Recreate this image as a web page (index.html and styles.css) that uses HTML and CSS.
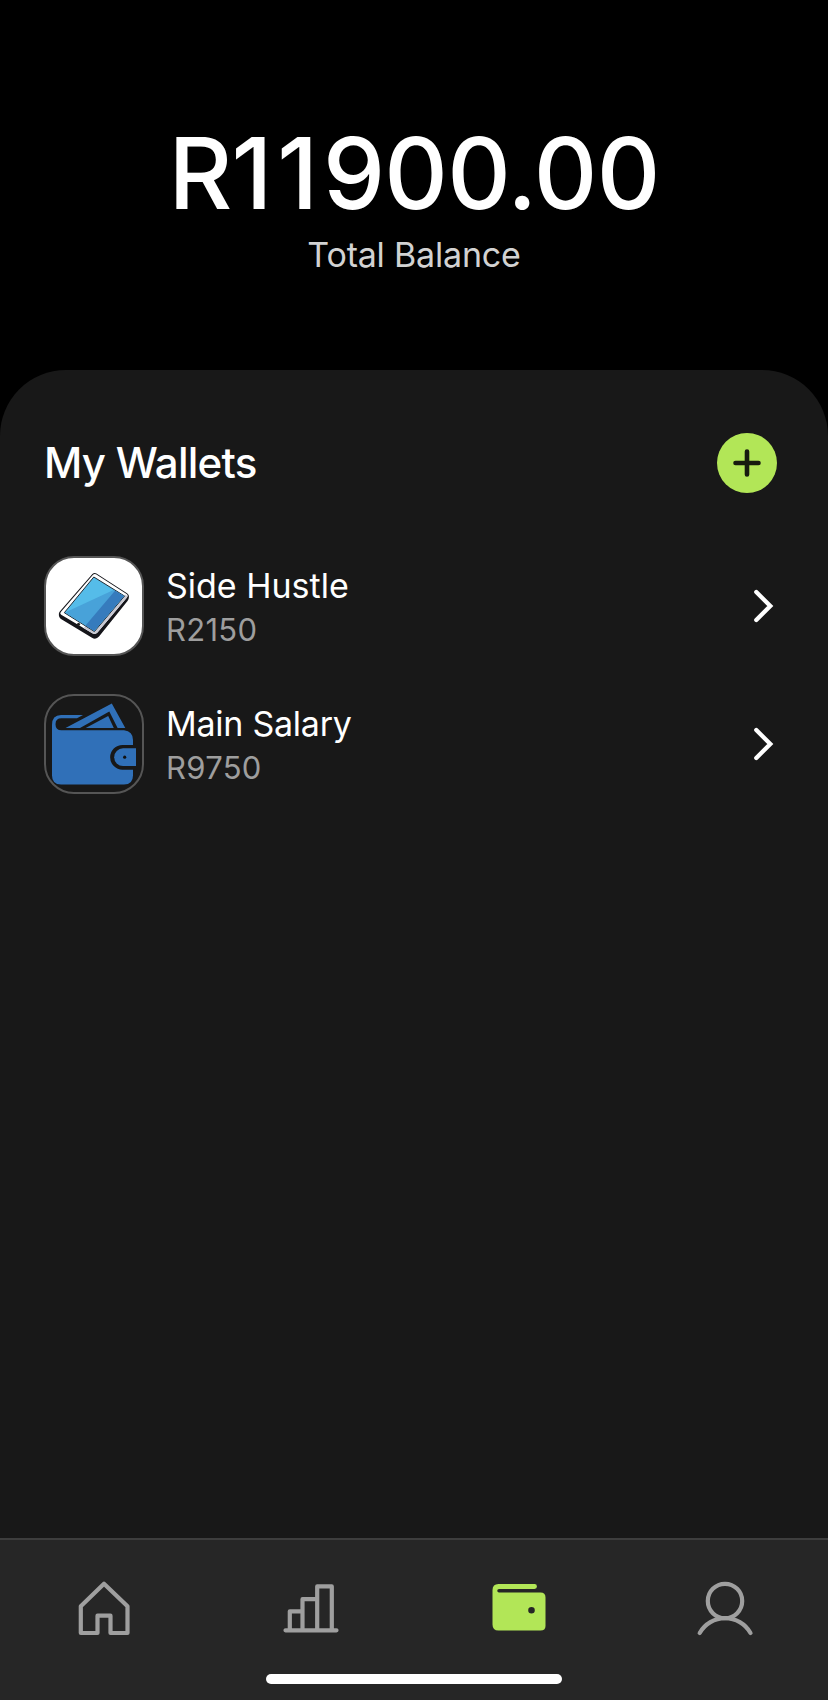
FILE: index.html
```html
<!DOCTYPE html>
<html lang="en">
<head>
<meta charset="utf-8">
<title>My Wallets</title>
<link rel="stylesheet" href="styles.css">
</head>
<body>
<div class="app">
  <header class="balance">
    <div class="balance-amount">R<span class="ones">11</span>900.00</div>
    <div class="balance-label">Total Balance</div>
  </header>
  <main class="sheet">
    <div class="sheet-head">
      <h1 class="sheet-title">My Wallets</h1>
      <button class="add" aria-label="Add wallet">
        <svg width="60" height="60" viewBox="0 0 60 60"><path d="M18.5 30h23M30 18.5v23" stroke="#171b0f" stroke-width="4.6" stroke-linecap="round"/></svg>
      </button>
    </div>
    <ul class="wallets">
      <li class="wallet">
        <div class="tile tile-light">
          <svg width="100" height="100" viewBox="0 0 100 100">
            <path d="M48.4 18Q50.3 16.3 52.4 17.5L83 37.3Q85.5 39 84.8 42Q84.6 43.500 83.500 45L55 80.500Q52 84 48 81.800L17 63Q14.500 61.300 14.900 57.500Q15 56.500 16 55.200Z" fill="#15151a"/>
            <path d="M48.800 19Q50.300 17.300 52 18.300L82.600 38Q84.700 39.500 83 41.500L53.500 76.500Q51.300 79 48.300 77.200L17.200 58.800Q15.500 57.600 16.800 56Z" fill="#fff"/>
            <path d="M81 38.500L82.600 39.500Q83.800 40.500 83 41.500L53.500 76.500Q51.300 79 48.300 77.200L39.500 72L42 69.500L50.500 75Z" fill="#c9c9d3"/>
            <path d="M49.800 21L80.500 40L50.400 75.500L20.300 56.700Z" fill="#55bce9" stroke="#222b35" stroke-width="1"/>
            <path d="M21 56.600L69.500 34L80 40.100L50.300 74.900Z" fill="#48a2d9"/>
            <path d="M71 34.800L80 40.100L50.300 74.900L41.500 69.400Z" fill="#367bbd"/>
            <circle cx="34.500" cy="68.200" r="1.500" fill="#222"/>
          </svg>
        </div>
        <div class="info"><div class="name name-side">Side Hustle</div><div class="sum">R2150</div></div>
        <svg class="chevron" width="24" height="40" viewBox="0 0 24 40"><path d="M5.300 6L19.300 20L5.300 34"/></svg>
      </li>
      <li class="wallet">
        <div class="tile">
          <svg width="100" height="100" viewBox="0 0 100 100">
            <g fill="#3070b8">
              <path d="M8 31Q8 21 17 21H39L33 24.300H17.500Q11.500 24.300 11.500 30.200Q11.500 36.300 17.500 36.300H80Q89 37.500 89 46V51H78.500A12.300 12.300 0 0 0 78.500 75.700H89V81.500Q89 90.500 80 90.500H17Q8 90.500 8 81.500Z"/>
              <path fill-rule="evenodd" d="M21.500 33.900L67.800 9.500L81.300 33.900H73.600L65.300 17.600L36 33.900Z"/>
              <path d="M41.700 33.900L64.200 22L69.800 33.900Z"/>
              <path d="M92 54.300V72H79A8.850 8.850 0 0 1 79 54.300Z"/>
            </g>
            <circle cx="80.700" cy="63.200" r="1.600" fill="#111"/>
          </svg>
        </div>
        <div class="info"><div class="name name-main">Main Salary</div><div class="sum">R9750</div></div>
        <svg class="chevron" width="24" height="40" viewBox="0 0 24 40"><path d="M5.300 6L19.300 20L5.300 34"/></svg>
      </li>
    </ul>
  </main>
  <nav class="nav">
    <div class="tabs">
      <a class="tab"><svg width="60" height="60" viewBox="0 0 60 60"><path d="M30 5.700L53.500 28.300V55H36.500V37.700H23.500V55H6.800V28.300Z"/></svg></a>
      <a class="tab"><svg width="60" height="60" viewBox="0 0 60 60"><path d="M4.500 52.300H55.500M8.800 52.300V33.300H21.500M21.500 52.300V21.200H36.200M36.200 52.300V8.400H50.800V52.300"/></svg></a>
      <a class="tab tab-active"><svg width="60" height="60" viewBox="0 0 60 60"><path fill-rule="evenodd" d="M10.500 6H46.500A2.400 2.400 0 0 1 46.500 10.900H11A1.700 1.700 0 0 0 11 14.400H52.500Q57.500 14.400 57.500 19.400V48Q57.500 52.600 52.500 52.600H10.500Q4.500 52.600 4.500 46.600V12Q4.500 6 10.500 6ZM43.500 29A3.300 3.300 0 1 0 43.500 35.600A3.300 3.300 0 1 0 43.500 29Z"/></svg></a>
      <a class="tab"><svg width="60" height="60" viewBox="0 0 60 60"><circle cx="30" cy="23" r="17.200"/><path d="M4.700 55A29.200 29.200 0 0 1 55.500 55"/></svg></a>
    </div>
    <div class="home-indicator"></div>
  </nav>
</div>
</body>
</html>
```
FILE: styles.css
```css
* { box-sizing: border-box; }
body { margin: 0; background: #000; color: #fff; font-family: Inter, "Liberation Sans", sans-serif; }
.app { width: 828px; height: 1700px; display: flex; flex-direction: column; overflow: hidden; }
.balance { height: 370px; flex: none; padding-top: 113px; display: flex; flex-direction: column; align-items: center; }
.balance-amount { font-size: 98.600px; line-height: 120px; font-weight: 500; letter-spacing: -0.8px; white-space: nowrap; }
.ones { letter-spacing: 4.800px; font-kerning: none; }
.balance-label { font-size: 34px; line-height: 42px; margin-top: 1px; letter-spacing: -0.2px; color: #d2d2d2; }
.sheet { flex: 1; background: #181818; border-radius: 66px 66px 0 0; padding: 63px 51px 0 44px; }
.sheet-head { display: flex; justify-content: space-between; align-items: center; height: 60px; }
.sheet-title { margin: 0; font-size: 42px; line-height: 60px; font-weight: 500; letter-spacing: -0.75px; }
.add { width: 60px; height: 60px; border: 0; padding: 0; border-radius: 50%; background: #b2e657; }
.add svg, .tile svg, .tab svg { display: block; }
.wallets { list-style: none; margin: 63px 0 0; padding: 0; display: flex; flex-direction: column; gap: 38px; }
.wallet { display: flex; align-items: center; height: 100px; }
.tile { width: 100px; height: 100px; flex: none; border: 2px solid #555; border-radius: 30px; overflow: hidden; }
.tile svg { margin: -2px; }
.tile-light { background: #fff; }
.info { flex: 1; margin-left: 22px; padding-top: 1px; }
.name { font-size: 34px; line-height: 46px; }
.name-main { letter-spacing: -0.25px; }
.sum { font-size: 31px; line-height: 42px; letter-spacing: 0.3px; color: #9e9e9e; }
.chevron { fill: none; stroke: #fff; stroke-width: 4.300; stroke-linecap: round; stroke-linejoin: miter; margin-right: 2px; }
.nav { height: 162px; flex: none; background: #262626; border-top: 2px solid #3d3d3d; display: flex; flex-direction: column; align-items: center; }
.tabs { width: 100%; padding-top: 38px; display: grid; grid-template-columns: repeat(4, 1fr); justify-items: center; }
.tab svg { fill: none; stroke: #9f9f9f; stroke-width: 4.200; stroke-linecap: round; stroke-linejoin: round; }
.tab-active svg { fill: #b2e657; stroke: none; }
.home-indicator { width: 296px; height: 10px; border-radius: 5px; background: #fff; margin-top: 36px; }
```
